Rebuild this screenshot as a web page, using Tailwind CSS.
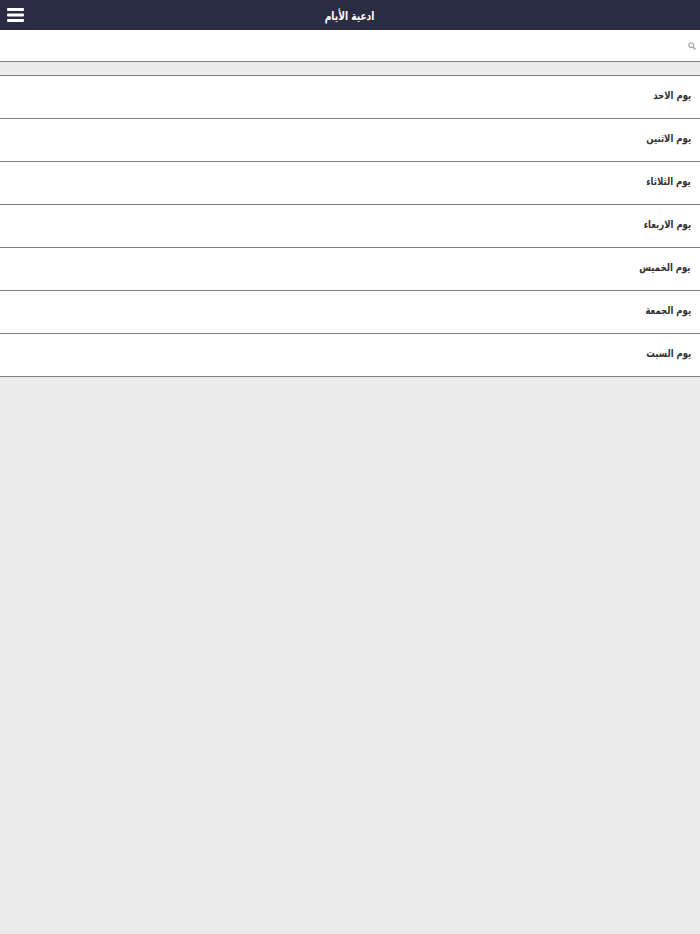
<!DOCTYPE html>
<html lang="ar" dir="rtl">
<head>
<meta charset="utf-8">
<script src="https://cdn.jsdelivr.net/npm/@tailwindcss/browser@4"></script>
<title>ادعية الأيام</title>
</head>
<body class="bg-[#ececec] min-h-[934px] font-['DejaVu_Sans_Condensed','DejaVu_Sans',sans-serif]">
<header class="h-[30px] bg-[#2a2c43] flex items-center justify-between px-[7px]" dir="ltr">
  <svg width="17" height="15" viewBox="0 0 17 15" class="mb-[1px]">
    <rect x="0" y="1" width="17" height="3" rx="1" fill="#fff"/>
    <rect x="0" y="6.5" width="17" height="3" rx="1" fill="#fff"/>
    <rect x="0" y="12" width="17" height="3" rx="1" fill="#fff"/>
  </svg>
  <h1 class="flex-1 text-center text-white text-[12px] font-bold pr-[17px] pt-[1px]" dir="rtl"><span class="inline-block scale-x-[.84]">ادعية الأيام</span></h1>
</header>
<div class="h-[32px] bg-white border-b border-[#808080] flex items-center pr-[4px] pt-[1px]">
  <svg width="8" height="8" viewBox="0 0 8 8" fill="none" stroke="#a8a8a8">
    <circle cx="3.2" cy="3.2" r="2.4" stroke-width="1.1"/>
    <path d="M5 5 L7.5 7.5" stroke-width="1.4"/>
  </svg>
</div>
<ul class="mt-[13px] border-t border-[#808080] bg-white">
  <li class="h-[43px] border-b border-[#808080] flex items-center pr-[9px] pb-[1px] text-[#333] text-[11px] font-bold"><span class="inline-block origin-right scale-x-[.86]">يوم الاحد</span></li>
  <li class="h-[43px] border-b border-[#808080] flex items-center pr-[9px] pb-[1px] text-[#333] text-[11px] font-bold"><span class="inline-block origin-right scale-x-[.86]">يوم الاثنين</span></li>
  <li class="h-[43px] border-b border-[#808080] flex items-center pr-[9px] pb-[1px] text-[#333] text-[11px] font-bold"><span class="inline-block origin-right scale-x-[.86]">يوم الثلاثاء</span></li>
  <li class="h-[43px] border-b border-[#808080] flex items-center pr-[9px] pb-[1px] text-[#333] text-[11px] font-bold"><span class="inline-block origin-right scale-x-[.86]">يوم الاربعاء</span></li>
  <li class="h-[43px] border-b border-[#808080] flex items-center pr-[9px] pb-[1px] text-[#333] text-[11px] font-bold"><span class="inline-block origin-right scale-x-[.86]">يوم الخميس</span></li>
  <li class="h-[43px] border-b border-[#808080] flex items-center pr-[9px] pb-[1px] text-[#333] text-[11px] font-bold"><span class="inline-block origin-right scale-x-[.86]">يوم الجمعة</span></li>
  <li class="h-[43px] border-b border-[#808080] flex items-center pr-[9px] pb-[1px] text-[#333] text-[11px] font-bold"><span class="inline-block origin-right scale-x-[.86]">يوم السبت</span></li>
</ul>
</body>
</html>
